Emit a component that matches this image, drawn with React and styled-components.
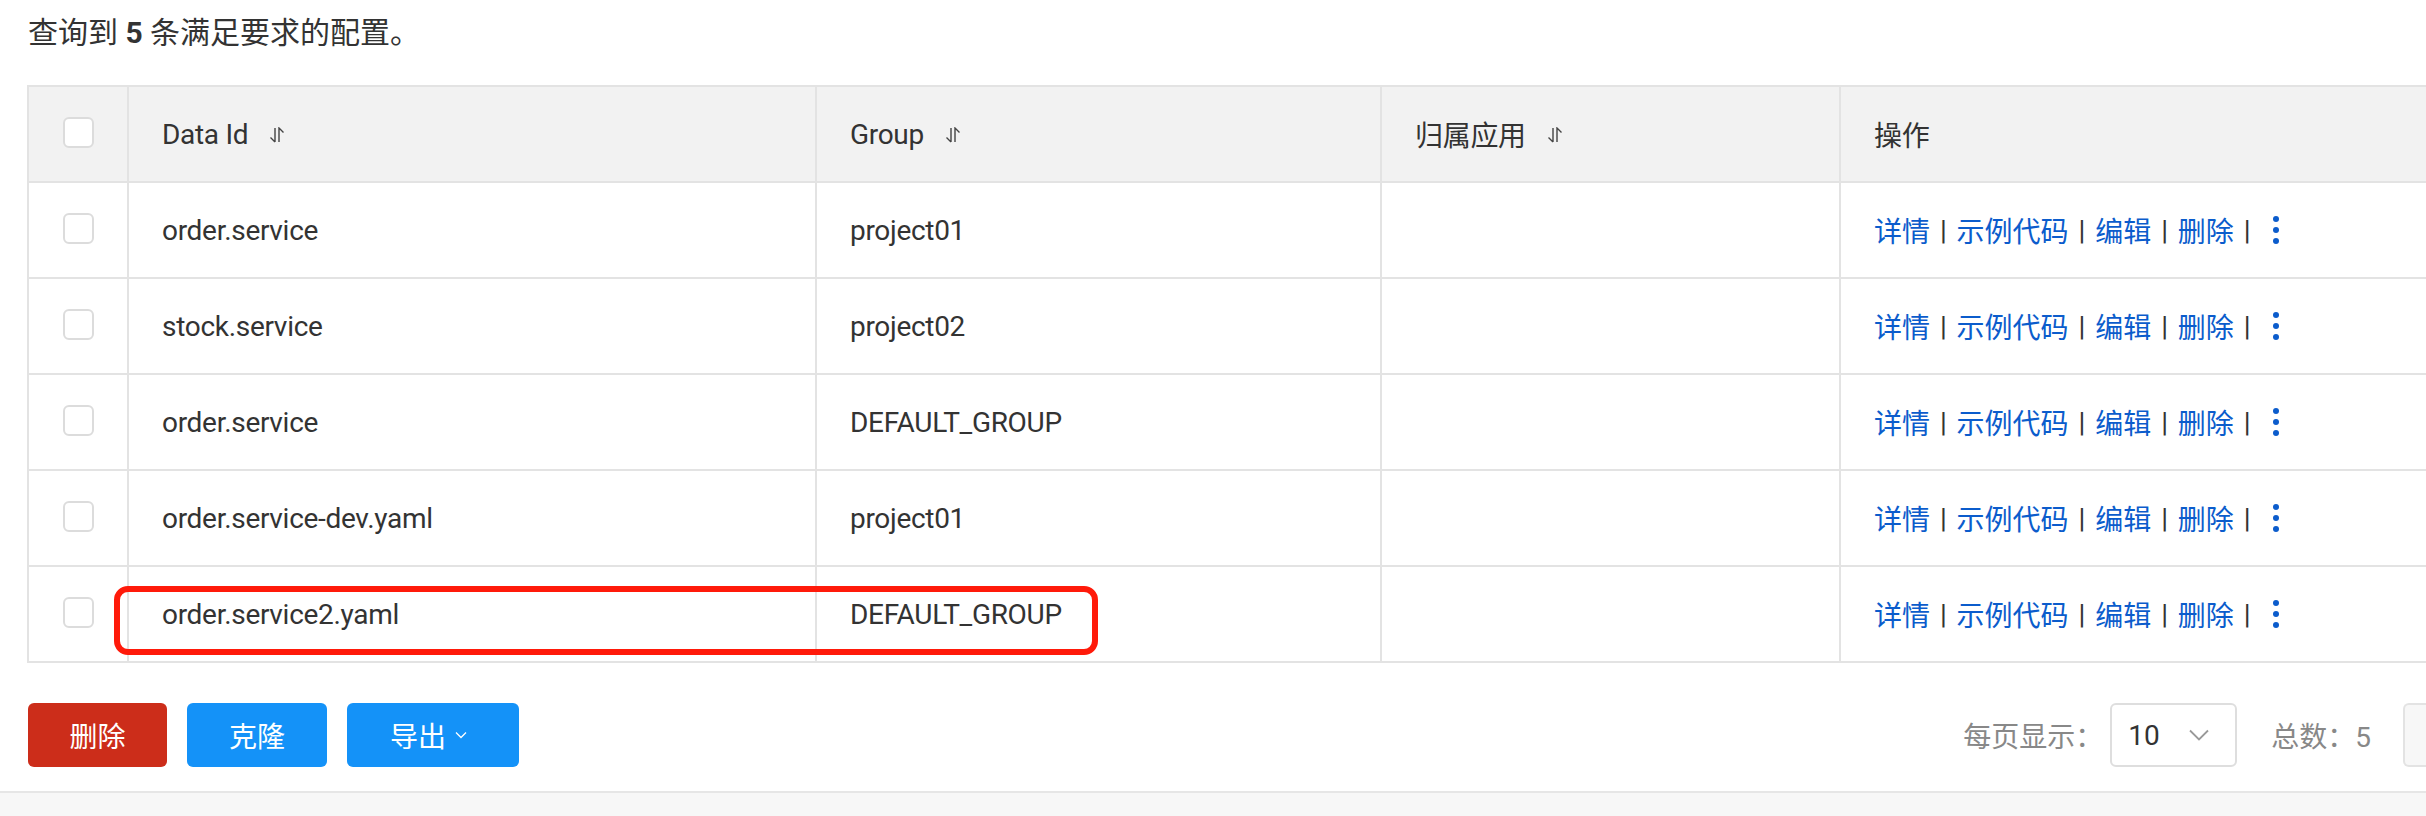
import React from "react";
import styled, { createGlobalStyle } from "styled-components";

const GlobalStyle = createGlobalStyle`
  html, body {
    margin: 0;
    padding: 0;
    background: #fff;
    overflow: hidden;
  }
  body {
    font-family: Roboto, "Noto Sans CJK SC", sans-serif;
    color: #333;
  }
`;

const Page = styled.div`
  width: 2480px;
  height: 816px;
  display: flex;
  flex-direction: column;
`;

const Content = styled.div`
  padding: 13px 0 24px 27px;
`;

const Summary = styled.div`
  font-size: 30px;
  line-height: 40px;
  color: #333;
  margin-left: 1px;
  b {
    font-weight: 700;
  }
`;

const Table = styled.div`
  margin-top: 32px;
  border-top: 2px solid #e3e3e3;
  border-left: 2px solid #e3e3e3;
`;

const Row = styled.div`
  position: relative;
  display: grid;
  grid-template-columns: 100px 688px 565px 459px 1fr;
  box-sizing: border-box;
  height: 96px;
  border-bottom: 2px solid #e3e3e3;
  background: ${(p) => (p.$head ? "#f2f2f2" : "#fff")};
`;

const Cell = styled.div`
  display: flex;
  align-items: center;
  justify-content: ${(p) => (p.$center ? "center" : "flex-start")};
  padding: 0 ${(p) => (p.$center ? 0 : 33)}px;
  border-right: 2px solid #e3e3e3;
  font-size: 28px;
  letter-spacing: -0.3px;
  color: #333;
  white-space: nowrap;
  overflow: hidden;
`;

const Checkbox = styled.span`
  width: 31px;
  height: 31px;
  box-sizing: border-box;
  border: 2px solid #dcdcdc;
  border-radius: 6px;
  background: #fff;
  margin-top: -4px;
`;

const SortIcon = styled.svg`
  width: 16px;
  height: 17px;
  margin-left: 21px;
  margin-top: 2px;
`;

const ActionLink = styled.a`
  color: #0b5ccc;
  margin-right: 10px;
  letter-spacing: 0;
  cursor: pointer;
`;

const Sep = styled.span`
  color: #333;
  margin-right: 10px;
`;

const MoreIcon = styled.svg`
  width: 10px;
  height: 30px;
  margin-left: 11px;
`;

const Highlight = styled.div`
  position: absolute;
  left: 85px;
  top: 19px;
  width: 984px;
  height: 69px;
  box-sizing: border-box;
  border: 6px solid #ff1a0a;
  border-radius: 14px;
  pointer-events: none;
`;

const Toolbar = styled.div`
  display: flex;
  align-items: center;
  gap: 20px;
  margin-top: 40px;
  margin-left: 1px;
`;

const Button = styled.button`
  display: flex;
  align-items: center;
  justify-content: ${(p) => (p.$left ? "flex-start" : "center")};
  gap: 9px;
  width: ${(p) => p.$w}px;
  height: 64px;
  padding: ${(p) => (p.$left ? "0 0 0 43px" : "0")};
  box-sizing: border-box;
  border: none;
  border-radius: 6px;
  background: ${(p) => (p.$danger ? "#cc2d1a" : "#1492f8")};
  color: #fff;
  font-family: Roboto, "Noto Sans CJK SC", sans-serif;
  font-size: 28px;
`;

const Pager = styled.div`
  display: flex;
  align-items: center;
  margin-left: auto;
  font-size: 28px;
  color: #888;
`;

const Select = styled.div`
  display: flex;
  align-items: center;
  width: 127px;
  height: 64px;
  box-sizing: border-box;
  margin-left: 7px;
  padding: 0 26px 0 16px;
  border: 2px solid #dedede;
  border-radius: 6px;
  color: #333;
  svg {
    margin-left: auto;
  }
`;

const Total = styled.span`
  margin-left: 34px;
`;

const PageBox = styled.div`
  width: 77px;
  height: 64px;
  box-sizing: border-box;
  margin-left: 32px;
  background: #f7f7f7;
  border: 2px solid #e3e3e3;
  border-right: none;
  border-radius: 6px 0 0 6px;
`;

const Footer = styled.div`
  flex: 1;
  background: #f7f7f7;
  border-top: 2px solid #e6e6e6;
`;

const Sort = () => (
  <SortIcon viewBox="0 0 16 17" fill="none" stroke="#444" strokeWidth="1.4">
    <path d="M6 1 V15 M1.5 10.5 L6 15" />
    <path d="M10 15 V1 L14.5 5.5" />
  </SortIcon>
);

const More = () => (
  <MoreIcon viewBox="0 0 10 30" fill="#0b5ccc">
    <circle cx="5" cy="4" r="3" />
    <circle cx="5" cy="15" r="3" />
    <circle cx="5" cy="26" r="3" />
  </MoreIcon>
);

const rows = [
  { id: "order.service", group: "project01" },
  { id: "stock.service", group: "project02" },
  { id: "order.service", group: "DEFAULT_GROUP" },
  { id: "order.service-dev.yaml", group: "project01" },
  { id: "order.service2.yaml", group: "DEFAULT_GROUP", marked: true },
];

const actions = ["详情", "示例代码", "编辑", "删除"];

export default function App() {
  return (
    <Page>
      <GlobalStyle />
      <Content>
        <Summary>
          查询到 <b>5</b> 条满足要求的配置。
        </Summary>
        <Table>
          <Row $head>
            <Cell $center>
              <Checkbox />
            </Cell>
            <Cell>
              Data Id
              <Sort />
            </Cell>
            <Cell>
              Group
              <Sort />
            </Cell>
            <Cell>
              归属应用
              <Sort />
            </Cell>
            <Cell>操作</Cell>
          </Row>
          {rows.map((r, i) => (
            <Row key={i}>
              <Cell $center>
                <Checkbox />
              </Cell>
              <Cell>{r.id}</Cell>
              <Cell>{r.group}</Cell>
              <Cell />
              <Cell>
                {actions.map((a) => (
                  <React.Fragment key={a}>
                    <ActionLink>{a}</ActionLink>
                    <Sep>|</Sep>
                  </React.Fragment>
                ))}
                <More />
              </Cell>
              {r.marked && <Highlight />}
            </Row>
          ))}
        </Table>
        <Toolbar>
          <Button $danger $w={139}>删除</Button>
          <Button $w={140}>克隆</Button>
          <Button $w={172} $left>
            导出
            <svg width="12" height="8" viewBox="0 0 12 8" fill="none" stroke="#fff" strokeWidth="1.3">
              <path d="M1 1.5 L6 6.5 L11 1.5" />
            </svg>
          </Button>
          <Pager>
            每页显示：
            <Select>
              10
              <svg width="20" height="12" viewBox="0 0 20 12" fill="none" stroke="#999" strokeWidth="1.8">
                <path d="M1 1.5 L10 10.5 L19 1.5" />
              </svg>
            </Select>
            <Total>总数：5</Total>
            <PageBox />
          </Pager>
        </Toolbar>
      </Content>
      <Footer />
    </Page>
  );
}
